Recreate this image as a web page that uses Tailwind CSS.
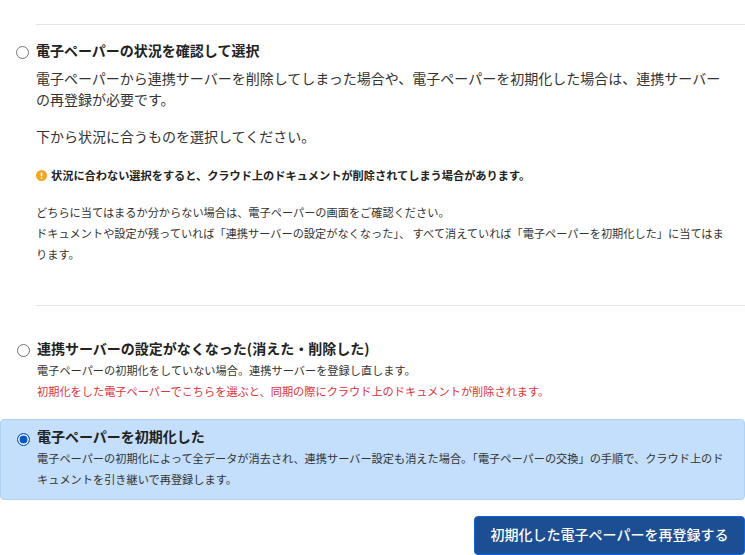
<!DOCTYPE html>
<html lang="ja">
<head>
  <meta charset="UTF-8" />
  <title>電子ペーパーの状況を確認して選択</title>
  <script src="https://cdn.jsdelivr.net/npm/@tailwindcss/browser@4"></script>
</head>
<body class="bg-white h-[555px] overflow-hidden font-['Noto_Sans_CJK_JP',sans-serif] text-[#333333]">
  <div class="pt-6">
    <!-- 状況の確認 -->
    <section class="pl-9">
      <hr class="border-[#e5e5e5]" />
      <label class="relative flex items-center mt-[15px] h-5">
        <input type="radio" name="status" class="absolute -left-5 top-[6px] w-[13px] h-[13px] m-0 appearance-none rounded-full border border-[#767676] bg-white" />
        <span class="text-sm font-bold text-[#222222]">電子ペーパーの状況を確認して選択</span>
      </label>
      <p class="mt-2 pr-4 text-sm leading-[21px] [word-spacing:-3px]">電子ペーパーから連携サーバーを削除してしまった場合や、電子ペーパーを初期化した場合は、 連携サーバーの再登録が必要です。</p>
      <p class="mt-4 text-sm leading-[21px]">下から状況に合うものを選択してください。</p>
      <p class="flex items-center gap-[4px] mt-[17px] text-[11.2px] font-bold text-[#222222] leading-[22px]">
        <svg class="w-[11px] h-[11px] shrink-0" viewBox="0 0 12 12"><circle cx="6" cy="6" r="6" fill="#f5a623"/><rect x="5.1" y="2.4" width="1.8" height="4.6" rx=".9" fill="#fff"/><circle cx="6" cy="8.8" r="1" fill="#fff"/></svg>
        状況に合わない選択をすると、クラウド上のドキュメントが削除されてしまう場合があります。
      </p>
      <p class="mt-4 pr-4 text-[11.2px] leading-[21px]">どちらに当てはまるか分からない場合は、電子ペーパーの画面をご確認ください。<br />ドキュメントや設定が残っていれば「連携サーバーの設定がなくなった」、 すべて消えていれば「電子ペーパーを初期化した」に当てはまります。</p>
      <hr class="mt-10 border-[#e5e5e5]" />
    </section>

    <!-- 選択肢 -->
    <div class="mt-[30px]">
      <label class="relative block pl-[37px] pr-4 h-[81px] pt-[2px]">
        <input type="radio" name="reset" class="absolute left-[17px] top-[8px] w-[13px] h-[13px] m-0 appearance-none rounded-full border border-[#767676] bg-white" />
        <div class="text-sm font-bold text-[#222222] leading-5">連携サーバーの設定がなくなった(消えた・削除した)</div>
        <div class="text-[11.2px] leading-[21px] mt-[2px]">電子ペーパーの初期化をしていない場合。連携サーバーを登録し直します。</div>
        <div class="text-[11.2px] leading-[21px] text-[#e0323c]">初期化をした電子ペーパーでこちらを選ぶと、同期の際にクラウド上のドキュメントが削除されます。</div>
      </label>
      <label class="relative block mt-[2px] pl-9 pr-4 h-[81px] pt-[6px] bg-[#c4dffc] border border-[#b0d2f5] rounded">
        <input type="radio" name="reset" checked class="absolute left-[16px] top-[13px] w-[13px] h-[13px] m-0 appearance-none rounded-full border border-[#0b57c4] bg-[#0b57c4] shadow-[inset_0_0_0_1.5px_#ffffff]" />
        <div class="text-sm font-bold text-[#222222] leading-5">電子ペーパーを初期化した</div>
        <div class="text-[11.2px] leading-[21px] mt-[2px]">電子ペーパーの初期化によって全データが消去され、連携サーバー設定も消えた場合。「電子ペーパーの交換」の手順で、クラウド上のドキュメントを引き継いで再登録します。</div>
      </label>
    </div>

    <div class="flex justify-end mt-4">
      <button class="w-[271px] h-[39px] pb-1 bg-[#1b4e92] border border-[#0a66e0] rounded text-white text-sm font-medium">初期化した電子ペーパーを再登録する</button>
    </div>
  </div>
</body>
</html>
